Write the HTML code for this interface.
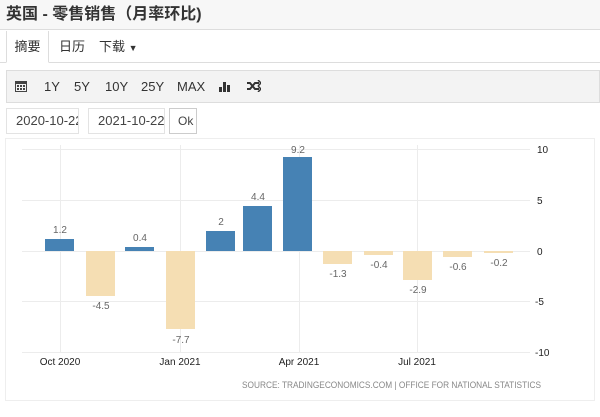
<!DOCTYPE html>
<html><head><meta charset="utf-8"><style>
body{margin:0;width:600px;height:417px;background:#fff;font-family:"Liberation Sans","Noto Sans CJK SC",sans-serif;overflow:hidden;position:relative}
.title{position:absolute;left:0;top:0;width:600px;height:30px;background:#f7f7f7;border-bottom:1px solid #ddd;font-size:16px;font-weight:bold;color:#333;line-height:30px;padding-left:6px;box-sizing:border-box}
.tabs{position:absolute;top:31px;left:0;width:600px;height:31px;border-bottom:1px solid #ddd}
.tab{position:absolute;top:0;height:31px;line-height:31px;font-size:13px;color:#333}
.tab.active{left:6px;width:41px;border:1px solid #ddd;border-bottom:1px solid #fff;border-top:none;background:#fff;text-align:center;height:31px}
.tb{position:absolute;left:6px;top:70px;width:594px;height:33px;background:#f3f3f3;border:1px solid #ddd;box-sizing:border-box}
.tb span{position:absolute;top:0;line-height:32px;font-size:13px;color:#333}
.inp{position:absolute;top:108px;height:26px;border:1px solid #e3e3e3;box-sizing:border-box;font-size:13px;color:#444;line-height:24px;padding-left:9px;overflow:hidden;white-space:nowrap;background:#fff}
.chart{position:absolute;left:5px;top:138px;width:590px;height:263px;border:1px solid #eee;box-sizing:border-box}
</style></head><body>
<div class="title">英国 - 零售销售（月率环比)</div>
<div class="tabs">
<div class="tab active">摘要</div>
<div class="tab" style="left:59px">日历</div>
<div class="tab" style="left:99px">下载 <span style="font-size:9px">▼</span></div>
</div>
<div class="tb">
<span style="left:8px;top:1px"><svg width="12" height="12" viewBox="0 0 12 12"><rect x="0" y="1" width="12" height="11" fill="#444"/><rect x="1" y="4" width="10" height="7" fill="#f3f3f3"/><g fill="#444"><rect x="2" y="5" width="2" height="2"/><rect x="5" y="5" width="2" height="2"/><rect x="8" y="5" width="2" height="2"/><rect x="2" y="8" width="2" height="2"/><rect x="5" y="8" width="2" height="2"/><rect x="8" y="8" width="2" height="2"/></g></svg></span>
<span style="left:37px">1Y</span><span style="left:67px">5Y</span><span style="left:98px">10Y</span><span style="left:134px">25Y</span><span style="left:170px">MAX</span>
<span style="left:212px;top:1px"><svg width="12" height="12" viewBox="0 0 12 12" fill="#333"><rect x="0" y="7" width="3" height="5"/><rect x="4" y="2" width="3" height="10"/><rect x="8" y="5" width="3" height="7"/></svg></span>
<span style="left:240px;top:1px"><svg width="14" height="12" viewBox="0 0 14 12" fill="none" stroke="#333" stroke-width="2"><path d="M0 3h3l5 6h4M0 9h3l5-6h4"/><path d="M11 0l3 3-3 3M11 6l3 3-3 3" stroke-width="1.5"/></svg></span>
</div>
<div class="inp" style="left:6px;width:73px">2020-10-22</div>
<div class="inp" style="left:88px;width:77px">2021-10-22</div>
<div class="inp" style="left:169px;width:28px;padding-left:8px;font-size:12px;border-color:#ccc">Ok</div>
<div class="chart"></div>
<svg style="position:absolute;left:0;top:0" width="600" height="417" font-family="Liberation Sans, sans-serif">
<g stroke="#ececec" stroke-width="1">
<line x1="22" x2="530" y1="149.5" y2="149.5"/><line x1="22" x2="530" y1="200.5" y2="200.5"/><line x1="22" x2="530" y1="251.5" y2="251.5"/><line x1="22" x2="530" y1="301.5" y2="301.5"/><line x1="22" x2="530" y1="352.5" y2="352.5"/>
<line x1="60.5" x2="60.5" y1="145" y2="352"/><line x1="180.5" x2="180.5" y1="145" y2="352"/><line x1="299.5" x2="299.5" y1="145" y2="352"/><line x1="417.5" x2="417.5" y1="145" y2="352"/>
</g>
<g fill="#4682b4">
<rect x="45" y="239" width="29" height="12"/><rect x="125" y="247" width="29" height="4"/><rect x="206" y="231" width="29" height="20"/><rect x="243" y="206" width="29" height="45"/><rect x="283" y="157" width="29" height="94"/>
</g>
<g fill="#f5deb3">
<rect x="86" y="251" width="29" height="45"/><rect x="166" y="251" width="29" height="78"/><rect x="323" y="251" width="29" height="13"/><rect x="364" y="251" width="29" height="4"/><rect x="403" y="251" width="29" height="29"/><rect x="443" y="251" width="29" height="6"/><rect x="484" y="251" width="29" height="2"/>
</g>
<g font-size="10" fill="#666" text-anchor="middle">
<text x="60" y="233">1.2</text><text x="101" y="309">-4.5</text><text x="140" y="241">0.4</text><text x="181" y="343">-7.7</text><text x="221" y="225">2</text><text x="258" y="200">4.4</text><text x="298" y="153">9.2</text><text x="338" y="277">-1.3</text><text x="379" y="268">-0.4</text><text x="418" y="293">-2.9</text><text x="458" y="270">-0.6</text><text x="499" y="266">-0.2</text>
</g>
<g font-size="10" fill="#222">
<text x="537" y="153">10</text><text x="537" y="204">5</text><text x="537" y="255">0</text><text x="535" y="305">-5</text><text x="535" y="356">-10</text>
</g>
<g font-size="10" fill="#222" text-anchor="middle">
<text x="60" y="365">Oct 2020</text><text x="180" y="365">Jan 2021</text><text x="299" y="365">Apr 2021</text><text x="417" y="365">Jul 2021</text>
</g>
<text x="242" y="388" font-size="9.5" fill="#888" textLength="299" lengthAdjust="spacingAndGlyphs">SOURCE: TRADINGECONOMICS.COM | OFFICE FOR NATIONAL STATISTICS</text>
</svg>
</body></html>
